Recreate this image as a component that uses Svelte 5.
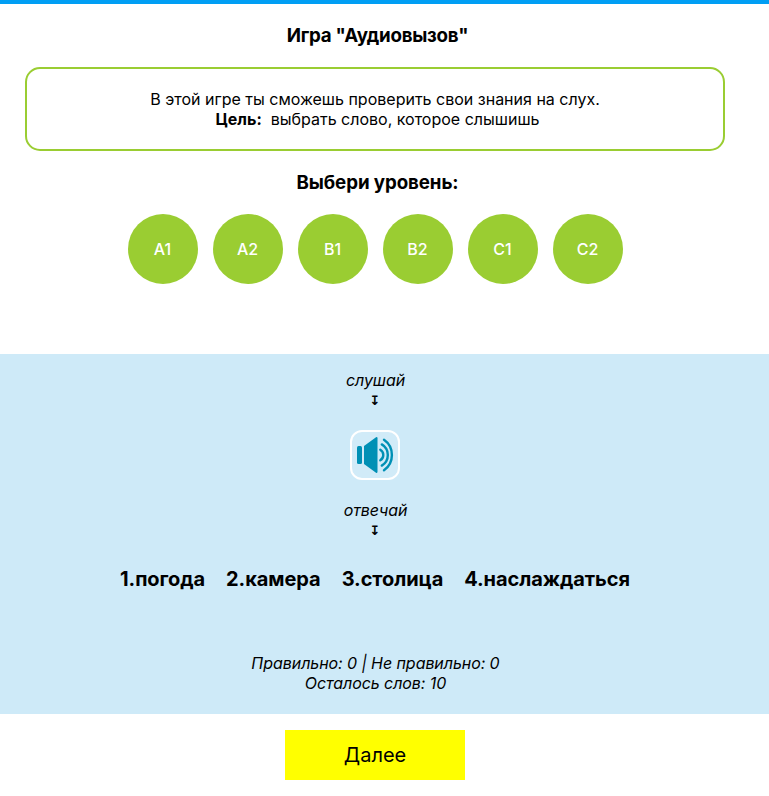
<script>
  const levels = ['A1', 'A2', 'B1', 'B2', 'C1', 'C2'];
  const words = ['погода', 'камера', 'столица', 'наслаждаться'];
</script>

<main>
  <section class="intro">
    <h3 class="title">Игра "Аудиовызов"</h3>
    <div class="rules">
      <div>В этой игре ты сможешь проверить свои знания на слух.</div>
      <div class="goal"><b>Цель:</b>&nbsp; выбрать слово, которое слышишь</div>
    </div>
    <h3 class="choose">Выбери уровень:</h3>
    <div class="levels">
      {#each levels as level}
        <button class="level">{level}</button>
      {/each}
    </div>
  </section>

  <section class="game">
    <div class="inner">
      <div class="hint"><i>слушай</i></div>
      <div class="arrow">↧</div>
      <button class="sound" aria-label="слушай">
        <svg width="46" height="46" viewBox="0 0 46 46">
          <g fill="#0090b5">
            <rect x="5" y="14" width="5" height="18" rx="1.5" />
            <path d="M12 14L24 5.3Q25.5 4.5 25.5 6.2V39.8Q25.5 41.5 24 40.7L12 32Z" />
          </g>
          <g fill="none" stroke="#0090b5" stroke-width="2.4" stroke-linecap="round">
            <path d="M28.3 17.7Q31.3 19.5 31.3 23T28.3 28.3" />
            <path d="M29.8 12.4Q35.8 16 35.8 23T29.8 33.6" />
            <path d="M32 7.7Q39.9 13.2 39.9 23T32 38.3" />
          </g>
        </svg>
      </button>
      <div class="hint second"><i>отвечай</i></div>
      <div class="arrow">↧</div>
      <div class="words">
        {#each words as word, i}
          <span>{i + 1}.{word}</span>
        {/each}
      </div>
      <div class="score">
        <i>Правильно: 0 | Не правильно: 0</i>
        <i>Осталось слов: 10</i>
      </div>
    </div>
  </section>
  <div class="footer"><button class="next">Далее</button></div>
</main>

<style>
  :global(body) { background: #fff; }
  main {
    box-sizing: border-box;
    height: 796px;
    overflow: hidden;
    border-top: 4px solid #009ef4;
    font-family: Inter, "Liberation Sans", sans-serif;
    font-size: 16px;
    line-height: 20px;
    color: #000;
    text-align: center;
  }
  button { font-family: inherit; padding: 0; cursor: pointer; }
  .intro { box-sizing: border-box; width: 750px; height: 350px; padding-top: 20px; }
  h3 { margin: 0; padding-left: 5px; font-size: 18.72px; line-height: 23px; font-weight: 700; }
  .title { letter-spacing: -0.24px; }
  .choose { letter-spacing: -0.08px; }
  .rules {
    box-sizing: border-box;
    width: 700px;
    height: 84px;
    margin: 20px auto 20px;
    padding-top: 20px;
    border: 2px solid #9acd32;
    border-radius: 15px;
  }
  .goal { padding-left: 5px; }
  .levels { display: flex; justify-content: center; gap: 15px; margin-top: 20px; }
  .level {
    width: 70px;
    height: 70px;
    border: 0;
    border-radius: 50%;
    background: #9acd32;
    color: #fff;
    font-size: 16px;
    font-weight: 450;
  }
  .game { height: 360px; background: #ceeaf8; }
  .inner { display: flex; flex-direction: column; align-items: center; width: 750px; padding-top: 16px; }
  .hint, .arrow { height: 20px; }
  .hint, .score { padding-left: 1px; letter-spacing: -0.08px; }
  .arrow { font-family: "DejaVu Sans", sans-serif; font-size: 13px; line-height: 22px; font-weight: 700; }
  .sound {
    box-sizing: border-box;
    width: 50px;
    height: 50px;
    margin: 20px 0;
    border: 2px solid #fff;
    border-radius: 12px;
    background: rgba(255, 255, 255, 0.08);
  }
  .sound svg { display: block; }
  .words {
    display: flex;
    gap: 21px;
    margin-top: 26px;
    font-size: 20px;
    line-height: 26px;
    font-weight: 700;
    letter-spacing: -0.07px;
  }
  .score { display: flex; flex-direction: column; margin-top: 61px; }
  .footer { width: 750px; padding-top: 16px; }
  .next { width: 180px; height: 50px; border: 0; border-radius: 0; background: #ff0; color: #000; font-size: 20px; }
</style>
